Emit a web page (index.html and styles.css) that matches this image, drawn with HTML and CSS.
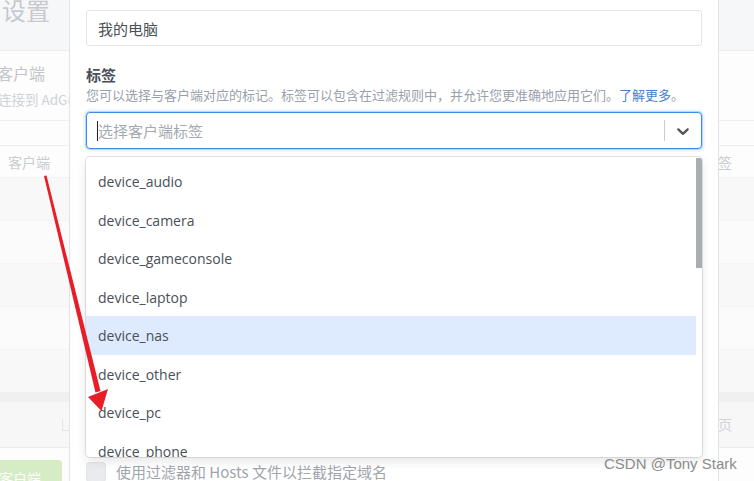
FILE: index.html
```html
<!DOCTYPE html>
<html lang="zh-CN">
<head>
<meta charset="utf-8">
<title>设置 - 客户端</title>
<link rel="stylesheet" href="styles.css">
</head>
<body>
<div class="page">
  <header class="page-header"><h1 class="page-title">设置</h1></header>
  <section class="card">
    <div class="card-header">
      <div class="card-title">客户端</div>
      <div class="card-subtitle">连接到 AdGuard Home 的客户端列表</div>
    </div>
    <div class="toolbar"></div>
    <div class="thead"><span>客户端</span><span>标签</span></div>
    <div class="tbody">
      <div class="tr"></div>
      <div class="tr"></div>
      <div class="tr"></div>
      <div class="tr"></div>
      <div class="tr"></div>
    </div>
    <div class="tfoot-band"></div>
    <div class="pager"><span class="pager-box"></span><span class="pager-next">下一页</span></div>
  </section>
  <div class="actions"><button class="btn-add" type="button">添加客户端</button></div>
</div>

<div class="modal">
  <div class="modal-body">
    <input class="form-control" type="text" value="我的电脑">
    <div class="field">
      <div class="form-label">标签</div>
      <div class="form-desc">您可以选择与客户端对应的标记。标签可以包含在过滤规则中，并允许您更准确地应用它们。<a class="link" href="#">了解更多</a>。</div>
      <div class="select">
        <div class="select-control">
          <div class="select-value"><span class="caret"></span><span class="placeholder">选择客户端标签</span></div>
          <div class="select-indicators">
            <span class="select-sep"></span>
            <span class="select-dd">
              <svg width="20" height="20" viewBox="0 0 20 20" aria-hidden="true"><path fill="#555" d="M4.516 7.548c0.436-0.446 1.043-0.481 1.576 0l3.908 3.747 3.908-3.747c0.533-0.481 1.141-0.446 1.574 0 0.436 0.445 0.408 1.197 0 1.615-0.406 0.418-4.695 4.502-4.695 4.502-0.217 0.223-0.502 0.335-0.787 0.335s-0.57-0.112-0.789-0.335c0 0-4.287-4.084-4.695-4.502s-0.436-1.17 0-1.615z"/></svg>
            </span>
          </div>
        </div>
        <div class="select-menu">
          <div class="menu-list">
            <div class="option">device_audio</div>
            <div class="option">device_camera</div>
            <div class="option">device_gameconsole</div>
            <div class="option">device_laptop</div>
            <div class="option is-focused">device_nas</div>
            <div class="option">device_other</div>
            <div class="option">device_pc</div>
            <div class="option">device_phone</div>
            <div class="option">device_printer</div>
            <div class="option">device_securityalarm</div>
            <div class="option">device_smartspeaker</div>
            <div class="option">device_streaming</div>
            <div class="option">device_tablet</div>
            <div class="option">device_tv</div>
            <div class="option">os_android</div>
            <div class="option">os_ios</div>
            <div class="option">os_linux</div>
            <div class="option">os_macos</div>
            <div class="option">os_windows</div>
            <div class="option">user_admin</div>
            <div class="option">user_child</div>
          </div>
          <div class="menu-thumb"></div>
        </div>
      </div>
    </div>
    <label class="check"><span class="check-box"></span><span class="check-label">使用过滤器和 Hosts 文件以拦截指定域名</span></label>
  </div>
</div>

<svg class="annotation" width="754" height="481" viewBox="0 0 754 481" aria-hidden="true">
  <polygon fill="#e81d28" points="44,176 46.5,175.5 100.5,391 95.5,392.5"/>
  <polygon fill="#e81d28" points="88,397 108,389 101.5,411"/>
</svg>
<div class="watermark">CSDN @Tony Stark</div>
</body>
</html>
```

FILE: styles.css
```css
* { box-sizing: border-box; }
html, body { margin: 0; padding: 0; }
body {
  width: 754px;
  height: 481px;
  overflow: hidden;
  position: relative;
  background: #fdfdfd;
  font-family: "Open Sans", "Noto Sans CJK SC", sans-serif;
}

/* ---------- background page ---------- */
.page { width: 754px; }
.page-header {
  height: 53px;
  background: #f6f7f9;
  border-bottom: 1px solid #ebedf0;
  padding-left: 2px;
}
.page-title {
  margin: -2px 0 0;
  font-family: "Noto Sans CJK SC", sans-serif;
  font-size: 24px;
  line-height: 24px;
  font-weight: 400;
  color: #c6c9ce;
}
.card { background: #fdfdfd; }
.card-header {
  height: 70px;
  padding-top: 11px;
  margin-left: -3px;
  border-bottom: 1px solid #eeeff2;
  font-family: "Noto Sans CJK SC", sans-serif;
}
.card-title { font-size: 16px; line-height: 22px; color: #c3c6cb; }
.card-subtitle { margin-top: 5px; margin-left: 1px; font-size: 13.5px; line-height: 20px; color: #cfd2d6; white-space: nowrap; }
.toolbar { height: 25px; border-bottom: 1px solid #eeeff2; }
.thead {
  display: flex;
  justify-content: space-between;
  align-items: center;
  height: 31px;
  padding: 0 22px 0 8px;
  font-family: "Noto Sans CJK SC", sans-serif;
  font-size: 14px;
  color: #c9ccd0;
}
.tr { height: 43px; border-top: 1px solid #f4f4f4; background: #fbfbfb; }
.tr:nth-child(odd) { background: #f8f8f8; }
.tfoot-band { height: 10px; background: #f0f0f0; }
.pager {
  display: flex;
  justify-content: space-between;
  align-items: flex-start;
  height: 46px;
  padding: 0 22px 0 62px;
  background: #f7f7f7;
  border-bottom: 1px solid #ececec;
}
.pager-box {
  width: 8px;
  height: 12px;
  margin-top: 17px;
  border-left: 1px solid #e4e4e4;
  border-bottom: 1px solid #e4e4e4;
}
.pager-next {
  margin-top: 12px;
  font-family: "Noto Sans CJK SC", sans-serif;
  font-size: 14px;
  line-height: 20px;
  color: #d2d4d7;
}
.actions { padding-top: 12px; }
.btn-add {
  display: block;
  margin-left: -50px;
  width: 112px;
  height: 36px;
  padding: 0;
  border: none;
  border-radius: 3px;
  background: #d5ecc4;
  color: #fff;
  font-family: "Noto Sans CJK SC", sans-serif;
  font-size: 14px;
  line-height: 36px;
}

/* ---------- modal ---------- */
.modal {
  position: absolute;
  left: 69px;
  top: 0;
  bottom: 0;
  width: 650px;
  background: #fff;
  border-left: 1px solid #dfe3ea;
  border-right: 1px solid #dfe3ea;
}
.modal-body { padding: 10px 16px 0; }
.form-control {
  display: block;
  width: 100%;
  height: 36px;
  padding: 0 11px;
  border: 1px solid #e0e5ec;
  border-radius: 3px;
  background: #fff;
  font-family: "Noto Sans CJK SC", sans-serif;
  font-size: 15px;
  color: #495057;
  outline: none;
}
.field { margin-top: 18px; }
.form-label {
  font-family: "Noto Sans CJK SC", sans-serif;
  font-size: 15px;
  line-height: 21px;
  font-weight: 700;
  color: #495057;
}
.form-desc {
  font-family: "Noto Sans CJK SC", sans-serif;
  font-size: 13px;
  line-height: 20px;
  color: #9aa0ac;
  white-space: nowrap;
}
.link { color: #467fcf; text-decoration: none; }

.select { position: relative; margin-top: 7px; }
.select-control {
  display: flex;
  align-items: center;
  height: 37px;
  border: 1px solid #3b8de6;
  border-radius: 4px;
  box-shadow: 0 0 0 1px rgba(59, 141, 230, 0.3), 0 0 0 3px rgba(59, 141, 230, 0.08);
  background: #fff;
}
.select-value {
  flex: 1;
  display: flex;
  align-items: center;
  padding-left: 10px;
}
.caret { width: 1px; height: 20px; background: #222; }
.placeholder {
  font-family: "Noto Sans CJK SC", sans-serif;
  font-size: 15px;
  line-height: 21px;
  color: #a4aab1;
}
.select-indicators { display: flex; align-self: stretch; align-items: center; }
.select-sep { align-self: stretch; width: 1px; margin: 7px 0; background: #cccccc; }
.select-dd { display: flex; padding: 8px; }
.select-dd svg { display: block; }

.select-menu {
  position: absolute;
  left: 0;
  right: 0;
  top: calc(100% + 8px);
  background: #fff;
  border-radius: 4px;
  box-shadow: 0 0 0 1px rgba(0, 0, 0, 0.1), 0 4px 11px rgba(0, 0, 0, 0.1);
  overflow: hidden;
  z-index: 2;
}
.menu-list {
  height: 300px;
  overflow: hidden;
  padding: 5px 6px 0 0;
}
.menu-thumb {
  position: absolute;
  right: 0;
  top: 1px;
  width: 6px;
  height: 110px;
  background: #a9aeb3;
}
.option {
  padding: 9px 12px 7px;
  font-size: 14px;
  line-height: 22.5px;
  color: #495057;
}
.option.is-focused { background: #deebff; }

.check {
  display: flex;
  align-items: center;
  gap: 10px;
  margin-top: 313px;
}
.check-box {
  width: 20px;
  height: 20px;
  border-radius: 3px;
  background: #e9ebee;
  border: 1px solid #e2e5e9;
}
.check-label {
  font-family: "Noto Sans CJK SC", sans-serif;
  font-size: 15px;
  line-height: 20px;
  color: #a0a5ac;
}

/* ---------- overlays ---------- */
.annotation { position: absolute; left: 0; top: 0; pointer-events: none; z-index: 5; }
.watermark {
  position: absolute;
  left: 604px;
  top: 455px;
  font-family: "Liberation Sans", sans-serif;
  font-size: 15px;
  line-height: 18px;
  color: #8c8c8c;
  white-space: nowrap;
  z-index: 6;
}
```
